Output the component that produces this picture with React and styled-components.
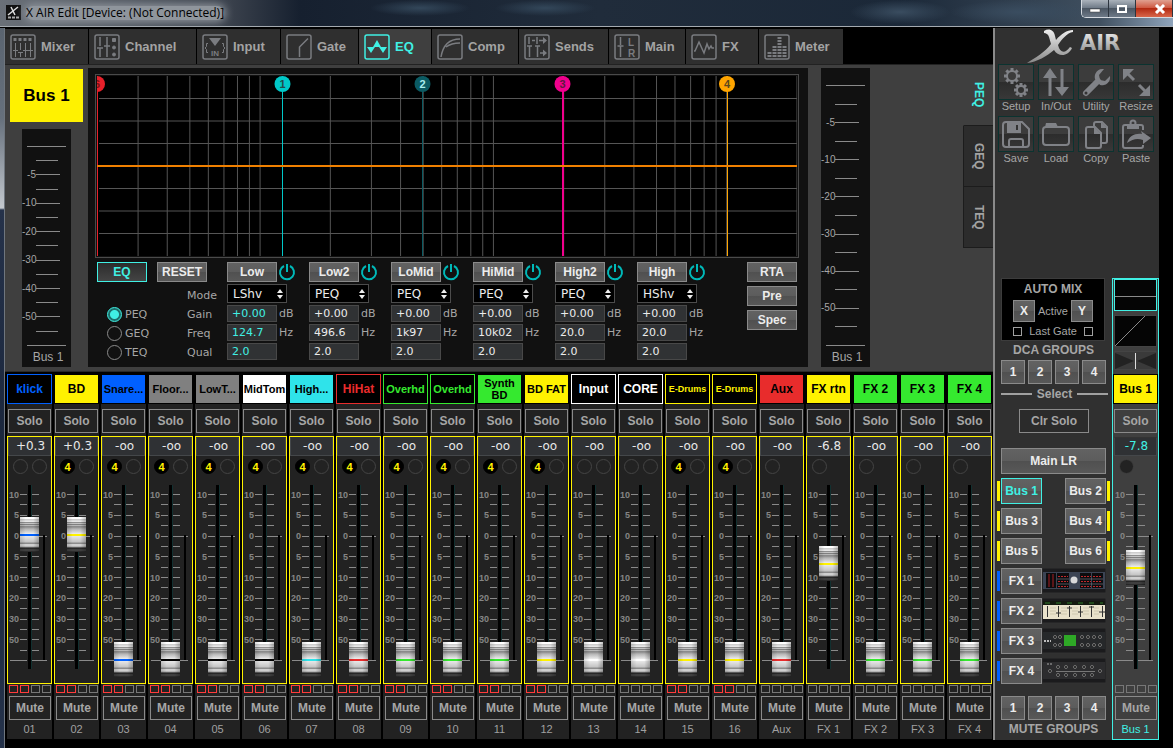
import React, { useState } from "react";
import styled, { createGlobalStyle, css } from "styled-components";

const SANS = '"Liberation Sans", Arial, sans-serif';
const WIDE = '"DejaVu Sans", Verdana, sans-serif';
const CYAN = "#40f0e4";
const YELLOW = "#fff200";
const BLUE = "#0060ff";
const GREEN = "#35e92f";
const RED = "#e82c2c";
const AQUA = "#2fe3ea";

const Global = createGlobalStyle`
  * { box-sizing: border-box; }
  body { margin: 0; background: #000; font: 12px ${SANS}; color: #a6a6a6; }
  button, input, select { font: inherit; color: inherit; margin: 0; padding: 0; border-radius: 0; }
  fieldset { border: 0; margin: 0; padding: 0; min-width: 0; }
`;

/* ---------- window ---------- */

const Window = styled.div`
  min-height: 100vh;
  display: flex;
  flex-direction: column;
`;
const TitleBar = styled.header`
  height: 28px;
  display: flex;
  align-items: center;
  justify-content: space-between;
  overflow: hidden;
  background:
    radial-gradient(ellipse 50px 8px at 420px 8px, #33475a, transparent),
    radial-gradient(ellipse 50px 8px at 545px 8px, #33475a, transparent),
    radial-gradient(ellipse 50px 12px at 900px 12px, #3a4d60, transparent),
    radial-gradient(ellipse 70px 12px at 1020px 12px, #3a4d60, transparent),
    linear-gradient(90deg, #6a7078 0, #3a414c 230px, #16202f 300px, #202c3b 600px, #1b2838 900px, #405060 1100px, #8fa4bb 100%);
  border-bottom: 1px solid #000;
  box-shadow: inset 0 -1px 0 #a4aab0;
`;
const Caption = styled.div`
  display: flex;
  align-items: center;
  gap: 5px;
  padding: 0 0 2px 6px;
  font: 12px "Open Sans", "Noto Sans", sans-serif;
  color: #000;
`;
const CaptionText = styled.span`
  background: #8f959c;
  border-radius: 8px;
  box-shadow: 0 0 8px 2px #8f959c;
  line-height: 14px;
`;
const WindowButtons = styled.div`
  display: flex;
  align-self: flex-start;
  border: 1px solid #d5dae0;
  border-top: 0;
  border-right: 0;
  border-bottom-left-radius: 5px;
  overflow: hidden;
`;
const WindowButton = styled.button`
  width: ${(p) => (p.$close ? 37 : 27)}px;
  height: 17px;
  border: 0;
  border-right: 1px solid #2c343e;
  display: grid;
  place-items: center;
  padding-left: ${(p) => (p.$close ? 11 : 0)}px;
  background: ${(p) =>
    p.$close
      ? "linear-gradient(#e0a090, #cf5a43 45%, #b32a12 50%, #d8664a)"
      : "linear-gradient(#aab2bb, #717c89 45%, #4b5663 50%, #6d7987)"};
`;
const Body = styled.div`
  flex: 1;
  display: flex;
  align-items: flex-start;
`;
const Frame = styled.div`
  flex: none;
  align-self: stretch;
  width: 5px;
  border-right: 1px solid #6f767e;
  background: linear-gradient(#5a6470 0, #66707c 90px, #c3c8ce 180px, #25324a 182px, #1a263c 60%, #24324a);
`;
const Console = styled.main`
  flex: 1;
  min-width: 0;
`;

/* ---------- top tabs ---------- */

const Tabs = styled.nav`
  display: flex;
  height: 37px;
  padding-top: 1px;
  background: #000;
  border-bottom: 1px solid #222;
`;
const Tab = styled.button`
  display: flex;
  align-items: center;
  gap: 5px;
  padding: 0 0 0 5px;
  width: ${(p) => p.$width}px;
  border: 0;
  border-right: 1px solid #000;
  background: ${(p) => (p.$active ? "#3f3f3f" : "#2f2f2f")};
  color: ${(p) => (p.$active ? CYAN : "#a3a3a3")};
  font-weight: bold;
  font-size: 13px;
  svg { flex: none; color: ${(p) => (p.$active ? CYAN : "#7a7c80")}; }
`;

/* ---------- channel editor ---------- */

const Editor = styled.section`
  display: flex;
  background: #3f3f3f;
  padding-bottom: 4px;
`;
const ChannelColumn = styled.div`
  flex: none;
  width: 83px;
  padding: 4px 5px 0;
  display: flex;
  flex-direction: column;
  align-items: center;
  gap: 7px;
`;
const ChannelName = styled.div`
  align-self: stretch;
  height: 53px;
  display: grid;
  place-items: center;
  background: ${YELLOW};
  color: #000;
  font-weight: bold;
  font-size: 17px;
`;
const MeterBox = styled.div`
  flex: ${(p) => (p.$side ? "none" : 1)};
  width: 49px;
  margin: ${(p) => (p.$side ? "3px 93px 0 13px" : "0")};
  padding-top: 17px;
  background: #111;
  display: flex;
  flex-direction: column;
`;
const MeterScale = styled.div`
  flex: 1;
  display: flex;
  flex-direction: column;
  justify-content: space-between;
`;
const MeterTick = styled.div`
  height: 1px;
  display: flex;
  align-items: center;
  padding-left: ${(p) => (p.$full ? 5 : 0)}px;
  span { width: 14px; text-align: right; font-size: 10px; line-height: 10px; }
  span:empty { display: ${(p) => (p.$full ? "none" : "block")}; }
  &::after {
    content: "";
    height: 1px;
    width: ${(p) => (p.$full ? 39 : p.$major ? 24 : 22)}px;
    background: #8a8a8a;
  }
`;
const MeterCaption = styled.div`
  height: 21px;
  line-height: 23px;
  text-align: center;
  padding-left: 3px;
`;
const EqPanel = styled.div`
  flex: 1;
  min-width: 0;
  margin-top: 3px;
  background: #111;
  padding: 6px 9px 5px 7px;
`;
const Graph = styled.div`
  height: 184px;
  border: 1px solid #4a4a4a;
  padding: 1px;
  svg { display: block; width: 100%; height: 100%; background: #000; }
`;
const Controls = styled.div`
  display: flex;
  padding: 4px 2px 0;
`;
const ModeBlock = styled.div`
  flex: none;
  width: 130px;
`;
const ButtonPair = styled.div`
  display: flex;
  gap: 10px;
  margin-bottom: 4px;
`;
const ModeBody = styled.div`
  display: flex;
  justify-content: space-between;
  font-family: ${WIDE};
  font-size: 11px;
`;
const Radios = styled.fieldset`
  padding: 19px 0 0 10px;
`;
const RadioRow = styled.label`
  display: flex;
  align-items: center;
  gap: 3px;
  height: 19px;
`;
const Radio = styled.input`
  appearance: none;
  width: 15px;
  height: 15px;
  border: 1px solid #8a8a8a;
  border-radius: 50%;
  &:checked {
    border-color: ${CYAN};
    background: radial-gradient(circle, ${CYAN} 0 4px, #1c6f6b 5px);
  }
`;
const RowNames = styled.div`
  width: 40px;
  line-height: 19px;
`;
const Button = styled.button`
  width: ${(p) => (p.$width ? p.$width + "px" : "auto")};
  height: ${(p) => p.$height || 20}px;
  border: 1px solid ${(p) => (p.$active ? CYAN : "#8a8a8a")};
  background: ${(p) => (p.$flat ? "#2b2b2b" : "linear-gradient(#626262, #5c5c5c 50%, #505050 50%, #585858)")};
  ${(p) => p.$dark && "background: linear-gradient(#2c2c2c, #444);"}
  color: ${(p) => (p.$active ? CYAN : p.$flat ? "#a6a6a6" : "#ececec")};
  font-size: 12px;
  font-weight: bold;
  text-align: center;
  white-space: nowrap;
`;
const Band = styled.div`
  flex: none;
  width: 82px;
  font-family: ${WIDE};
  font-size: 11px;
  display: grid;
  align-content: start;
  justify-items: start;
  gap: 2px;
`;
const BandHead = styled.div`
  display: flex;
  align-items: center;
  gap: 1px;
  font-family: ${SANS};
`;
const PowerButton = styled.button`
  width: 18px;
  height: 20px;
  border: 0;
  background: none;
  display: grid;
  place-items: center;
`;
const SelectBox = styled.div`
  position: relative;
  svg { position: absolute; right: 4px; top: 5px; pointer-events: none; }
`;
const Select = styled.select`
  display: block;
  appearance: none;
  width: 60px;
  height: 19px;
  padding-left: 5px;
  border: 1px solid #4c4c4c;
  background: #000;
  color: #ececec;
  font-size: 12px;
`;
const ValueRow = styled.label`
  display: flex;
  align-items: center;
  gap: 2px;
  height: 17px;
`;
const ValueInput = styled.input`
  width: 50px;
  height: 17px;
  padding-left: 4px;
  border: 1px solid #484848;
  background: #303234;
  color: ${(p) => (p.$active ? CYAN : "#ececec")};
`;
const SideButtons = styled.div`
  margin-left: auto;
  display: grid;
  align-content: start;
  gap: 4px;
`;
const VerticalTabs = styled.nav`
  flex: none;
  width: 30px;
`;
const VerticalTab = styled.button`
  display: block;
  width: 30px;
  height: 61px;
  border: 0;
  border-bottom: 1px solid #1c1c1c;
  border-left: 1px solid ${(p) => (p.$active ? "#3f3f3f" : "#1c1c1c")};
  background: ${(p) => (p.$active ? "#3f3f3f" : "#2c2c2c")};
  color: ${(p) => (p.$active ? CYAN : "#a3a3a3")};
  font-weight: bold;
  writing-mode: vertical-rl;
  line-height: 28px;
  text-align: center;
`;

/* ---------- fader strips ---------- */

const Strips = styled.section`
  display: grid;
  grid-template-columns: repeat(21, minmax(45px, 1fr));
  gap: 2px;
  padding: 2px 1px 0 2px;
  background: #000;
  border-top: 1px solid #2a2a2a;
`;
const Strip = styled.article`
  min-width: 0;
  background: #222;
`;
const StripName = styled.div`
  height: 30px;
  margin-bottom: 5px;
  display: grid;
  place-items: center;
  text-align: center;
  font-weight: bold;
  white-space: ${(p) => (p.$tight ? "normal" : "nowrap")};
  ${(p) =>
    p.$outline
      ? css`background: #000; color: ${p.$color}; border: 1px solid ${p.$color};`
      : css`background: ${p.$color}; color: #000; border: 1px solid #000;`}
  ${(p) => p.$size && `font-size: ${p.$size}px;`}
  ${(p) => p.$tight && "font-size: 11px; line-height: 12px;"}
`;
const StripButton = styled.button`
  display: block;
  width: calc(100% - ${(p) => (p.$mute ? 3 : 2)}px);
  height: 24px;
  margin: 0 0 0 ${(p) => (p.$mute ? 2 : 1)}px;
  border: 1px solid #8a8a8a;
  background: transparent;
  color: #a6a6a6;
  font-weight: bold;
`;
const FaderPanel = styled.div`
  height: 248px;
  margin: 3px 0 1px;
  border: 1px solid ${(p) => (p.$plain ? "transparent" : YELLOW)};
`;
const Readout = styled.output`
  display: block;
  height: 19px;
  line-height: 17px;
  padding-left: 2px;
  border: 1px solid #44474a;
  border-top-color: #333;
  background: #2f3134;
  color: ${(p) => (p.$active ? CYAN : "#e8e8e8")};
  text-align: center;
  font-family: ${WIDE};
  font-size: 12px;
`;
const Centered = styled.div`
  width: 43px;
  margin: 0 auto;
`;
const Dots = styled.div`
  height: 21px;
  padding-left: 5px;
  display: flex;
  align-items: center;
  gap: 4px;
`;
const Dot = styled.span`
  width: 15px;
  height: 15px;
  border-radius: 50%;
  border: 1px solid #444;
  color: ${YELLOW};
  font-size: 11px;
  line-height: 14px;
  font-weight: bold;
  text-align: center;
  ${(p) => p.$on && "background: #000; border-color: #000;"}
  ${(p) => p.$solid && "background: #222; border-color: #3f3f3f;"}
`;
const FaderArea = styled.div`
  display: grid;
  height: 200px;
  > * { grid-area: 1 / 1; }
`;
const FaderScale = styled.div`
  margin: 17px 0 16px;
  display: flex;
  flex-direction: column;
  justify-content: space-between;
`;
const FaderTick = styled.div`
  height: 1px;
  display: flex;
  align-items: center;
  span {
    width: 11px;
    direction: rtl;
    font-size: 9px;
    font-weight: bold;
    line-height: 10px;
    color: #858585;
  }
  &::before, &::after {
    content: "";
    height: 1px;
    width: 7px;
    background: #8a8a8a;
  }
  &::before { order: 1; margin-left: 1px; margin-right: 5px; }
  &::after { order: 2; width: ${(p) => (p.$zero || p.$end ? 15 : 7)}px; }
  ${(p) => p.$end && "span { width: 0; } &::before { width: 17px; margin-left: 2px; }"}
`;
const LevelBar = styled.div`
  justify-self: end;
  width: 2px;
  height: 125px;
  margin: 58px 6px 0 0;
  background: #000;
`;
const Fader = styled.input`
  appearance: none;
  writing-mode: vertical-lr;
  direction: rtl;
  display: block;
  width: 19px;
  height: 200px;
  margin: 0 0 0 12px;
  background: linear-gradient(90deg, #000 0 3px, #123030 3px) center / 4px 184px no-repeat;
  &::-webkit-slider-thumb {
    appearance: none;
    width: 19px;
    height: 35px;
    border: 0;
    background:
      linear-gradient(90deg, rgba(0, 0, 0, 0.15), transparent 30% 70%, rgba(0, 0, 0, 0.25)),
      linear-gradient(
        #fff 0 2px, #c9c9c9 2px, #ededed 5px, #8f8f8f 5px 6px, #c4c4c4 6px 7px, #808080 7px 8px,
        #b9b9b9 8px 9px, #8b8b8b 9px 10px, #b6b6b6 12px, #ededed 17px, ${(p) => p.$color} 17px 19px,
        #e8e8e8 19px, #c4c4c4 25px, #8d8d8d 26px 27px, #d0d0d0 27px 29px, #999 30px, #1d1d1d 31px, #4a4a4a 33px, #222 35px
      );
  }
`;
const GroupLamps = styled.div`
  display: flex;
  width: 45px;
  margin: 0 auto 3px;
  padding-left: 2px;
  gap: 2px;
`;
const Lamp = styled.i`
  width: 9px;
  height: 8px;
  border: 1px solid ${(p) => (p.$on ? "#ff3b3b" : "#777")};
`;
const StripLabel = styled.div`
  height: 19px;
  line-height: 19px;
  text-align: center;
  font-size: 11px;
  color: ${(p) => (p.$active ? CYAN : "#a0a0a0")};
`;

/* ---------- right side ---------- */

const Side = styled.aside`
  flex: none;
  width: 166px;
  margin-right: 14px;
  border-left: 2px solid #8a8a8a;
  background: #303030;
`;
const Logo = styled.div`
  height: 36px;
  padding-left: 30px;
  svg { display: block; }
`;
const Tools = styled.div`
  display: grid;
  grid-template-columns: repeat(4, 36px);
  gap: 1px 4px;
  padding-left: 3px;
  margin-bottom: 111px;
`;
const Tool = styled.button`
  border: 0;
  background: none;
  height: 51px;
  display: flex;
  flex-direction: column;
  align-items: center;
  font-size: 11px;
  line-height: 13px;
  white-space: nowrap;
  svg {
    display: block;
    width: 36px;
    height: 36px;
    border: 1px solid #0b3330;
    color: #808287;
    background: linear-gradient(#3c3c3c 50%, #2c2c2c 50%, #383838);
  }
`;
const SideBottom = styled.div`
  display: flex;
  justify-content: space-between;
`;
const GroupColumn = styled.div`
  width: 115px;
  padding-left: 6px;
  display: flex;
  flex-direction: column;
`;
const AutoMix = styled.div`
  width: 104px;
  height: 63px;
  padding: 4px 11px 0;
  border: 1px solid #3c3c3c;
  background: #000;
`;
const AutoMixTitle = styled.div`
  line-height: 12px;
  font-weight: bold;
  text-align: center;
`;
const Heading = styled.div`
  width: 105px;
  height: ${(p) => p.$height}px;
  line-height: ${(p) => p.$height}px;
  font-weight: bold;
  text-align: center;
  white-space: nowrap;
`;
const SplitRow = styled.div`
  display: flex;
  align-items: center;
  justify-content: space-between;
  margin-top: ${(p) => p.$top}px;
  font-size: 11px;
`;
const Check = styled.input`
  appearance: none;
  width: 9px;
  height: 9px;
  border: 1px solid #a0a0a0;
  &:checked { background: ${CYAN}; }
`;
const NumberRow = styled.div`
  display: flex;
  gap: 3px;
`;
const SelectRule = styled.div`
  display: flex;
  align-items: center;
  gap: 5px;
  width: 107px;
  height: 20px;
  font-weight: bold;
  &::before, &::after { content: ""; flex: 1; height: 2px; background: #a0a0a0; }
`;
const ClearRow = styled.div`
  padding: 5px 0 15px 18px;
`;
const Sends = styled.div`
  margin: 0 0 12px -4px;
  display: grid;
  gap: 4px;
  padding-top: 4px;
`;
const SendRow = styled.div`
  display: flex;
  align-items: center;
  width: 113px;
  height: 26px;
`;
const SendBar = styled.i`
  width: 3px;
  height: 20px;
  margin: ${(p) => (p.$right ? "0 0 0 1px" : "0 1px 0 0")};
  background: ${(p) => p.$color};
`;
const Grow = styled.span`
  flex: 1;
`;
const BusStrip = styled.article`
  width: 47px;
  border: 1px solid ${CYAN};
  background: #3f3f3f;
`;
const Preview = styled.svg`
  display: block;
  width: 43px;
  height: ${(p) => p.$height}px;
  margin: 0 1px 4px;
  background: ${(p) => p.$back || "#050505"};
  border: 1px solid ${(p) => (p.$active ? CYAN : "#444")};
`;

/* ---------- drawings ---------- */

const tabArt = {
  Mixer: (
    <>
      <path strokeDasharray="3 2" strokeWidth="3" d="M3.500 5.500h20" />
      <path d="M5.500 9v7M10.500 9v7M15.500 9v7M20.500 9v7M3 16.500h5M8 18.500h5M13 16.500h5M18 16.500h5M5.500 16v7M10.500 19v4M15.500 16v7M20.500 16v7" />
    </>
  ),
  Channel: (
    <>
      <path strokeWidth="1.500" d="M6 3v9M13 3v9M3 14h6M10 12h6M6 14v9M13 12v11" />
      <path d="M18.500 4.500h3v3h-3z" fill="currentColor" />
      <circle cx="20" cy="13.500" r="1.500" fill="currentColor" /><circle cx="20" cy="20.500" r="1.500" fill="currentColor" />
    </>
  ),
  Input: (
    <>
      <path fill="currentColor" stroke="none" d="M7 4h12l-6 8z" />
      <path d="M6 9.500H4.500v3L3 14l1.500 1.500v3H6M20 9.500h1.500v3L23 14l-1.500 1.500v3H20" />
      <text x="13" y="22" fontSize="8" fontWeight="bold" textAnchor="middle" fill="currentColor" stroke="none">IN</text>
    </>
  ),
  Gate: <path strokeWidth="1.500" d="M13.500 23V13L22 4.500" />,
  EQ: <path fill="currentColor" stroke="none" d="M3 13h6l4-7 4 7h6l-4 6-4-6h-4l-4 6z" />,
  Comp: <path strokeWidth="1.500" d="M4 23C6 11 12 5 23 5M9 13c4-3 8-4 14-4" />,
  Sends: (
    <>
      <path strokeWidth="1.500" d="M5 3v7M13 3v7M8 6.500h3M15 6.500h6M3 12h5M11 12h5M5.500 12v11M13.500 12v11M16 19h5" />
      <path fill="currentColor" stroke="none" d="M19 3l4 3.500-4 3.500zM19 15.500l4 3.500-4 3.500z" />
    </>
  ),
  Main: (
    <>
      <path strokeWidth="1.500" d="M6.500 3v8M3.500 12h6M6.500 12v11" />
      <text x="14" y="12" fontSize="10" fontWeight="bold" fill="currentColor" stroke="none">L</text>
      <text x="14" y="23" fontSize="10" fontWeight="bold" fill="currentColor" stroke="none">R</text>
    </>
  ),
  FX: <path strokeWidth="1.500" d="M3 17h1l4-9 5 11 3-9 2 5 2-3 1 2h2" />,
  Meter: (
    <path strokeWidth="4" strokeDasharray="2 1" d="M5.500 23v-6M10.500 23V12M15.500 23V3M20.500 23V11" />
  ),
};

function TabIcon({ name }) {
  return (
    <svg width="26" height="26" viewBox="0 0 26 26" fill="none" stroke="currentColor" aria-hidden="true">
      <rect x="1" y="1" width="24" height="24" rx="2" strokeWidth="1.500" />
      {tabArt[name]}
    </svg>
  );
}

const gearTeeth = (cx, cy, r) =>
  [0, 45, 90, 135, 180, 225, 270, 315].map((a) => (
    <rect key={a} x={cx - 1.5} y={cy - r - 2.5} width="3" height="3" fill="currentColor" stroke="none" transform={`rotate(${a} ${cx} ${cy})`} />
  ));

const toolArt = {
  Setup: (
    <>
      <circle cx="13" cy="11" r="5" />{gearTeeth(13, 11, 5.5)}
      <circle cx="22" cy="25" r="4" />{gearTeeth(22, 25, 4.5)}
    </>
  ),
  "In/Out": (
    <>
      <path strokeWidth="3" d="M11 31V10M23 4v20" />
      <path fill="currentColor" stroke="none" d="M11 3l7 10H4zM23 31l7-9H16z" />
    </>
  ),
  Utility: (
    <>
      <path strokeWidth="6" strokeLinecap="round" d="M7 28L19 16" />
      <path fill="currentColor" stroke="none" d="M25 4a8 8 0 0 0-9 10l5 6a8 8 0 0 0 10-9l-5 5-5-1-1-5z" />
      <circle cx="7" cy="28" r="1.500" fill="#333" stroke="none" />
    </>
  ),
  Resize: (
    <>
      <path strokeWidth="3" d="M7 7l8 8M20 20l8 8" />
      <path fill="currentColor" stroke="none" d="M4 4h11L4 15zM31 31H20l11-11z" />
    </>
  ),
  Save: (
    <>
      <path d="M7 5h16l7 7v15a3 3 0 0 1-3 3H7a3 3 0 0 1-3-3V8a3 3 0 0 1 3-3z" />
      <path d="M10 30v-6a2 2 0 0 1 2-2h10a2 2 0 0 1 2 2v6" />
      <path fill="currentColor" d="M9 6h12v9H9z" /><path stroke="#333" d="M18 8v5" />
    </>
  ),
  Load: (
    <>
      <rect x="4" y="10" width="26" height="18" rx="3" />
      <path fill="currentColor" stroke="none" d="M6 10l1-4h10l2 4z" />
    </>
  ),
  Copy: (
    <>
      <path d="M15 9V7a2 2 0 0 1 2-2h6l5 5v14a2 2 0 0 1-2 2h-3" />
      <path d="M9 10h7l6 6v13a2 2 0 0 1-2 2H9a2 2 0 0 1-2-2V12a2 2 0 0 1 2-2z" />
      <path fill="currentColor" stroke="none" d="M15 10l7 7h-7zM22 5l6 6h-6z" />
    </>
  ),
  Paste: (
    <>
      <path d="M8 8H6a2 2 0 0 0-2 2v19a2 2 0 0 0 2 2h16a2 2 0 0 0 2-2v-1M20 8h2a2 2 0 0 1 2 2v3" />
      <path fill="currentColor" stroke="none" d="M8 7h12v5H8z" /><circle cx="14" cy="6" r="2.500" />
      <path fill="currentColor" stroke="none" d="M8 26c2-7 8-10 15-9l-1-3 10 7-8 6v-4c-6-2-10-1-16 3z" />
    </>
  ),
};

function ToolIcon({ name }) {
  return (
    <svg viewBox="0 0 34 34" fill="none" stroke="currentColor" strokeWidth="2" aria-hidden="true">
      {toolArt[name]}
    </svg>
  );
}

function XAirLogo() {
  return (
    <svg width="112" height="36" viewBox="0 0 112 36" role="img" aria-label="X AIR">
      <defs>
        <linearGradient id="steel" x1="0" y1="0" x2="0" y2="1">
          <stop offset="0" stopColor="#eee" /><stop offset="1" stopColor="#888" />
        </linearGradient>
      </defs>
      <path
        fill="url(#steel)"
        d="M19 3c5-3 10-1 11 5l1 4C36 6 42 2 48 2l0 2c-6 1-11 7-15 13 2 8 7 9 12 2l2 1c-4 9-14 9-18 2C22 28 12 34 2 35c8-5 18-11 24-19l-2-7c-1-3-3-4-5-4z"
      />
      <text x="55" y="22" fontFamily="DejaVu Sans" fontWeight="bold" fontSize="21" fill="url(#steel)">AIR</text>
    </svg>
  );
}

const PowerIcon = () => (
  <svg width="18" height="18" viewBox="0 0 18 18" fill="none" stroke="#00b9b9" strokeWidth="2" aria-hidden="true">
    <path d="M6 3a7 7 0 1 0 6 0M9 1v8" />
  </svg>
);
const ArrowsIcon = () => (
  <svg width="6" height="10" viewBox="0 0 6 10" fill="#eee" aria-hidden="true">
    <path d="M0 4l3-4 3 4zM0 6l3 4 3-4z" />
  </svg>
);

function EqGraph() {
  const freqs = [];
  [10, 100, 1000, 10000].forEach((d) => {
    for (let i = 1; i < 10; i++) if (d * i > 20 && d * i <= 20000) freqs.push(d * i);
  });
  const at = (f) => `${(Math.log10(f / 20) / 3) * 100}%`;
  const bands = [
    { n: "6", x: "0%", c: "#e8202a", t: "#7a1015" },
    { n: "1", x: "26.5%", c: "#00c8c8", t: "#24484a" },
    { n: "2", x: "46.5%", c: "#0b5b63", t: "#a8eef0" },
    { n: "3", x: "66.5%", c: "#f0008c", t: "#5c1a40", w: 2 },
    { n: "4", x: "90%", c: "#ffa500", t: "#59471e" },
  ];
  return (
    <svg role="img" aria-label="Equalizer response">
      {freqs.map((f) => <line key={f} x1={at(f)} x2={at(f)} y1="0" y2="180" stroke="#555" />)}
      {[1, 2, 3, 5, 6, 7].map((i) => (
        <line key={i} x1="2" x2="100%" y1={i * 22.5} y2={i * 22.5} stroke="#555" />
      ))}
      {bands.map((b) => (
        <line key={b.n} x1={b.x} x2={b.x} y1="0" y2="180" stroke={b.c} strokeWidth={b.w || 1} shapeRendering="crispEdges" />
      ))}
      <line x1="0" x2="100%" y1="90" y2="90" stroke="#f08000" strokeWidth="2" />
      {bands.map((b) => (
        <g key={b.n}>
          <circle cx={b.x} cy="8" r="8" fill={b.c} />
          <text x={b.x} y="12" textAnchor="middle" fontSize="11" fontWeight="bold" fill={b.t}>{b.n}</text>
        </g>
      ))}
    </svg>
  );
}

function RackArt({ kind }) {
  const knobs = (xs, ys, fill) =>
    xs.flatMap((x) => ys.map((y) => <circle key={`${x}-${y}`} cx={x} cy={y} r="1.500" fill="#111" stroke={fill} />));
  return (
    <svg width="64" height="26" viewBox="0 0 64 26" aria-hidden="true">
      <rect width="64" height="25" fill="#1b1b1d" stroke="#333" />
      {kind === 0 && (
        <>
          <rect x="1" y="4" width="62" height="17" fill="#3c4454" />
          <path fill="#0c0c0e" d="M4 5h10v15H4zM15 5h12v15H15zM38 5h11v15H38zM50 5h11v15H50z" />
          <path stroke="#c0282c" strokeDasharray="2 1" d="M16 8.500h10M16 13.500h10M16 18.500h10M39 8.500h10M39 13.500h10M39 18.500h10M51 8.500h9M51 13.500h9M51 18.500h9" />
          <path stroke="#5a1518" strokeWidth="2" d="M7 6v13M11 6v13" />
          <path stroke="#99a" d="M15 11h12M15 16h12M38 11h23M38 16h23" strokeWidth="0.500" />
          <circle cx="32" cy="12" r="3.500" fill="#d8d8da" />
        </>
      )}
      {kind === 1 && (
        <>
          <rect x="1" y="5" width="62" height="16" fill="#e9e2cb" />
          <rect x="1" y="3" width="62" height="4" fill="#141a10" />
          <path stroke="#2f7a2a" strokeDasharray="5 6" d="M3 5h58" />
          <path stroke="#333" d="M5.500 8v11M16.500 8v11M27.500 8v11M38.500 8v11M49.500 8v11M60.500 8v11M14 15h5M25 10h5M36 14h5M47 9h5M57 14h6" />
          <path stroke="#b5ad93" strokeWidth="0.500" d="M8 10h6M8 13h6M8 16h6M19 10h6M19 13h6M19 16h6M30 10h6M30 13h6M30 16h6M41 10h6M41 13h6M41 16h6M52 10h5M52 13h5M52 16h5" />
        </>
      )}
      {kind === 2 && (
        <>
          <rect x="1" y="4" width="62" height="17" fill="#26282a" />
          <rect x="22" y="7" width="12" height="11" fill="#2ea826" />
          <path stroke="#bbb" strokeWidth="2" strokeDasharray="2 1" d="M2 13h7" />
          {knobs([13, 18, 40, 46, 52, 58], [9, 17], "#777")}
        </>
      )}
      {kind === 3 && (
        <>
          <rect x="1" y="4" width="62" height="17" fill="#2c2c2e" />
          {knobs([16, 24, 33, 42, 50], [9, 17], "#777")}
          {knobs([8, 58], [13], "#777")}
          <path stroke="#777" d="M14 13.500h39" />
          <path stroke="#aaa" strokeDasharray="2 1" d="M5 6h6" />
        </>
      )}
    </svg>
  );
}

/* ---------- data ---------- */

const TABS = [
  ["Mixer", 84], ["Channel", 108], ["Input", 84], ["Gate", 78], ["EQ", 73],
  ["Comp", 87], ["Sends", 90], ["Main", 77], ["FX", 73], ["Meter", 85],
];
const BANDS = [
  ["Low", "LShv", "124.7"], ["Low2", "PEQ", "496.6"], ["LoMid", "PEQ", "1k97"],
  ["HiMid", "PEQ", "10k02"], ["High2", "PEQ", "20.0"], ["High", "HShv", "20.0"],
];
const GREY = "#808080";
const STRIPS = [
  { name: "klick", color: BLUE, outline: true, level: "+0.3", pos: 755, groups: true, dca: false },
  { name: "BD", color: YELLOW, level: "+0.3", pos: 755, groups: true, dca: true },
  { name: "Snare...", color: BLUE, size: 11, groups: true, dca: true },
  { name: "Floor...", color: GREY, cap: "#000", size: 11, groups: true, dca: true },
  { name: "LowT...", color: GREY, cap: "#000", size: 11, groups: true, dca: true },
  { name: "MidTom", color: "#fff", cap: "#000", size: 11, groups: true, dca: true },
  { name: "High...", color: AQUA, size: 11, groups: true, dca: true },
  { name: "HiHat", color: RED, outline: true, groups: true, dca: true },
  { name: "Overhd", color: GREEN, outline: true, size: 11, groups: true, dca: true },
  { name: "Overhd", color: GREEN, outline: true, size: 11, groups: true, dca: true },
  { name: "Synth BD", color: GREEN, tight: true, groups: true, dca: true },
  { name: "BD FAT", color: YELLOW, size: 11, groups: true, dca: true },
  { name: "Input", color: "#fff", outline: true },
  { name: "CORE", color: "#fff", outline: true },
  { name: "E-Drums", color: YELLOW, outline: true, size: 9, groups: true, dca: true },
  { name: "E-Drums", color: YELLOW, outline: true, size: 9, groups: true, dca: true },
  { name: "Aux", color: RED, label: "Aux", single: true },
  { name: "FX rtn", color: YELLOW, label: "FX 1", single: true, level: "-6.8", pos: 581 },
  { name: "FX 2", color: GREEN, label: "FX 2", single: true },
  { name: "FX 3", color: GREEN, label: "FX 3", single: true },
  { name: "FX 4", color: GREEN, label: "FX 4", single: true },
];

/* ---------- parts ---------- */

function Meter({ side }) {
  const marks = ["full", "", "-5", "", "-10", "", "-20", "", "-30", "", "-40", "", "-50", "", "full"];
  return (
    <MeterBox $side={side}>
      <MeterScale>
        {marks.map((m, i) => (
          <MeterTick key={i} $full={m === "full"} $major={m !== ""}>
            <span>{m === "full" ? "" : m}</span>
          </MeterTick>
        ))}
      </MeterScale>
      <MeterCaption>Bus 1</MeterCaption>
    </MeterBox>
  );
}

const FADER_MARKS = ["10", "", "5", "", "0", "", "5", "", "10", "", "20", "", "30", "", "50", "", "end"];

function FaderUnit({ label, pos, color, dots }) {
  const [value, setValue] = useState(pos);
  return (
    <Centered>
      <Dots>{dots}</Dots>
      <FaderArea>
        <FaderScale>
          {FADER_MARKS.map((m, i) => (
            <FaderTick key={i} $zero={m === "0"} $end={m === "end"}>
              <span>{m === "end" ? "" : m}</span>
            </FaderTick>
          ))}
        </FaderScale>
        <LevelBar />
        <Fader
          type="range" min="0" max="1000" value={value} $color={color}
          onChange={(e) => setValue(Number(e.target.value))} aria-label={`${label} level`}
        />
      </FaderArea>
    </Centered>
  );
}

function ChannelStrip({ data, index }) {
  const label = data.label || String(index + 1).padStart(2, "0");
  return (
    <Strip>
      <StripName $color={data.color} $outline={data.outline} $size={data.size} $tight={data.tight}>{data.name}</StripName>
      <StripButton>Solo</StripButton>
      <FaderPanel>
        <Readout>{data.level || "-oo"}</Readout>
        <FaderUnit
          label={label}
          pos={data.pos || 0}
          color={data.cap || data.color}
          dots={<><Dot $on={data.dca}>{data.dca ? "4" : ""}</Dot>{!data.single && <Dot />}</>}
        />
      </FaderPanel>
      <GroupLamps>
        <Lamp $on={data.groups} /><Lamp $on={data.groups} /><Lamp /><Lamp />
      </GroupLamps>
      <StripButton $mute>Mute</StripButton>
      <StripLabel>{label}</StripLabel>
    </Strip>
  );
}

function EqBand({ name, mode, freq, active }) {
  return (
    <Band>
      <BandHead>
        <Button $width={50}>{name}</Button>
        <PowerButton aria-label={`${name} on`}><PowerIcon /></PowerButton>
      </BandHead>
      <SelectBox>
        <Select aria-label={`${name} mode`} defaultValue={mode}>
          <option>LShv</option><option>PEQ</option><option>HShv</option>
        </Select>
        <ArrowsIcon />
      </SelectBox>
      <ValueRow><ValueInput $active={active} defaultValue="+0.00" aria-label={`${name} gain`} />dB</ValueRow>
      <ValueRow><ValueInput $active={active} defaultValue={freq} aria-label={`${name} frequency`} />Hz</ValueRow>
      <ValueRow><ValueInput $active={active} defaultValue="2.0" aria-label={`${name} quality`} /></ValueRow>
    </Band>
  );
}

function SideGroups() {
  return (
    <GroupColumn>
      <AutoMix>
        <AutoMixTitle>AUTO MIX</AutoMixTitle>
        <SplitRow $top={5}>
          <Button $width={22} $height={22}>X</Button>Active<Button $width={22} $height={22}>Y</Button>
        </SplitRow>
        <SplitRow $top={3}>
          <Check type="checkbox" aria-label="Last Gate X" />Last Gate<Check type="checkbox" aria-label="Last Gate Y" />
        </SplitRow>
      </AutoMix>
      <Heading $height={19}>DCA GROUPS</Heading>
      <NumberRow>{[1, 2, 3, 4].map((n) => <Button key={n} $width={24} $height={24}>{n}</Button>)}</NumberRow>
      <SelectRule>Select</SelectRule>
      <ClearRow><Button $flat $width={70} $height={24}>Clr Solo</Button></ClearRow>
      <Button $width={105} $height={26}>Main LR</Button>
      <Sends>
        {[1, 3, 5].map((n) => (
          <SendRow key={n}>
            <SendBar $color={YELLOW} /><Button $width={41} $height={26} $active={n === 1}>Bus {n}</Button>
            <Grow />
            <Button $width={41} $height={26}>Bus {n + 1}</Button><SendBar $color={YELLOW} $right />
          </SendRow>
        ))}
        {[0, 1, 2, 3].map((n) => (
          <SendRow key={n}>
            <SendBar $color={BLUE} /><Button $width={41} $height={26}>FX {n + 1}</Button><RackArt kind={n} />
          </SendRow>
        ))}
      </Sends>
      <NumberRow>{[1, 2, 3, 4].map((n) => <Button key={n} $width={24} $height={24}>{n}</Button>)}</NumberRow>
      <Heading $height={19}>MUTE GROUPS</Heading>
    </GroupColumn>
  );
}

function SelectedBus() {
  return (
    <BusStrip>
      <Preview $height={32} $active><path d="M0 16.500h43" stroke="#8a8a8a" /></Preview>
      <Preview $height={32}><path d="M0 30L30 0" stroke="#8a8a8a" /></Preview>
      <Preview $height={19} $back="#3a3a3a">
        <path d="M0 1l19 8L0 17zM41 1L22 9l19 8z" fill="#222" />
        <path d="M20.500 1v16" stroke="#ddd" />
      </Preview>
      <StripName $color={YELLOW}>Bus 1</StripName>
      <StripButton>Solo</StripButton>
      <FaderPanel $plain>
        <Readout $active>-7.8</Readout>
        <FaderUnit label="Bus 1" pos={555} color={YELLOW} dots={<Dot $solid />} />
      </FaderPanel>
      <GroupLamps><Lamp /><Lamp /><Lamp /><Lamp /></GroupLamps>
      <StripButton $mute>Mute</StripButton>
      <StripLabel $active>Bus 1</StripLabel>
    </BusStrip>
  );
}

export default function App() {
  const [type, setType] = useState("PEQ");
  return (
    <Window>
      <Global />
      <TitleBar>
        <Caption>
          <svg width="15" height="15" viewBox="0 0 15 15" aria-hidden="true">
            <rect width="15" height="15" fill="#111" />
            <path d="M2 10L12 2M5 2l4 8" stroke="#ddd" strokeWidth="1.500" />
            <path d="M2 12.500h11" stroke="#aaa" strokeWidth="2" strokeDasharray="3 1" />
          </svg>
          <CaptionText>X AIR Edit [Device: (Not Connected)]</CaptionText>
        </Caption>
        <WindowButtons>
          <WindowButton aria-label="Minimize">
            <svg width="12" height="10"><rect x="1" y="5" width="10" height="3" fill="#fff" stroke="#444" strokeWidth="0.500" /></svg>
          </WindowButton>
          <WindowButton aria-label="Maximize">
            <svg width="12" height="10"><rect x="2" y="2" width="8" height="6" fill="none" stroke="#fff" strokeWidth="2" /></svg>
          </WindowButton>
          <WindowButton $close aria-label="Close">
            <svg width="12" height="10"><path d="M2 1l8 8M10 1L2 9" stroke="#fff" strokeWidth="3" /></svg>
          </WindowButton>
        </WindowButtons>
      </TitleBar>
      <Body>
        <Frame />
        <Console>
          <Tabs>
            {TABS.map(([name, width]) => (
              <Tab key={name} $width={width} $active={name === "EQ"}><TabIcon name={name} />{name}</Tab>
            ))}
          </Tabs>
          <Editor>
            <ChannelColumn>
              <ChannelName>Bus 1</ChannelName>
              <Meter />
            </ChannelColumn>
            <EqPanel>
              <Graph><EqGraph /></Graph>
              <Controls>
                <ModeBlock>
                  <ButtonPair>
                    <Button $width={50} $active $dark>EQ</Button>
                    <Button $width={50}>RESET</Button>
                  </ButtonPair>
                  <ModeBody>
                    <Radios>
                      {["PEQ", "GEQ", "TEQ"].map((t) => (
                        <RadioRow key={t}>
                          <Radio type="radio" name="eqType" checked={type === t} onChange={() => setType(t)} />{t}
                        </RadioRow>
                      ))}
                    </Radios>
                    <RowNames><div>Mode</div><div>Gain</div><div>Freq</div><div>Qual</div></RowNames>
                  </ModeBody>
                </ModeBlock>
                {BANDS.map(([name, mode, freq], i) => (
                  <EqBand key={name} name={name} mode={mode} freq={freq} active={i === 0} />
                ))}
                <SideButtons>
                  <Button $width={50}>RTA</Button><Button $width={50}>Pre</Button><Button $width={50}>Spec</Button>
                </SideButtons>
              </Controls>
            </EqPanel>
            <Meter side />
            <VerticalTabs>
              <VerticalTab $active>PEQ</VerticalTab><VerticalTab>GEQ</VerticalTab><VerticalTab>TEQ</VerticalTab>
            </VerticalTabs>
          </Editor>
          <Strips>{STRIPS.map((s, i) => <ChannelStrip key={i} data={s} index={i} />)}</Strips>
        </Console>
        <Side>
          <Logo><XAirLogo /></Logo>
          <Tools>
            {Object.keys(toolArt).map((t) => <Tool key={t}><ToolIcon name={t} />{t}</Tool>)}
          </Tools>
          <SideBottom>
            <SideGroups />
            <SelectedBus />
          </SideBottom>
        </Side>
      </Body>
    </Window>
  );
}
